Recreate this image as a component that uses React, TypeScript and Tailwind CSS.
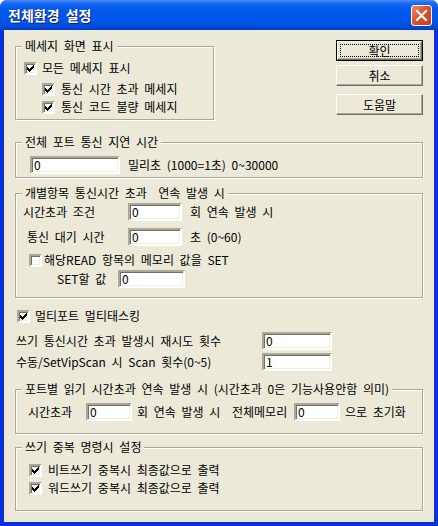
import type { ReactNode } from "react";

function Check({ checked = false }: { checked?: boolean }) {
  return (
    <span className="flex h-[13px] w-[13px] shrink-0 items-center justify-center border-2 border-t-[#ACA899] border-l-[#ACA899] border-r-white border-b-white bg-white shadow-[inset_1px_1px_0_#716F64,inset_-1px_-1px_0_#F1EFE2]">
      {checked && (
        <svg width="7" height="7" viewBox="0 0 7 7" shapeRendering="crispEdges">
          <path
            fill="#000"
            d="M6 0h1v1h-1z M5 1h2v1h-2z M0 2h1v1h-1z M4 2h3v1h-3z M0 3h2v1h-2z M3 3h3v1h-3z M0 4h5v1h-5z M1 5h3v1h-3z M2 6h1v1h-1z"
          />
        </svg>
      )}
    </span>
  );
}

function Edit({ value, className = "" }: { value: string; className?: string }) {
  return (
    <div
      className={`flex h-[18px] shrink-0 items-center border-2 border-t-[#ACA899] border-l-[#ACA899] border-r-white border-b-white bg-white pl-[2px] shadow-[inset_1px_1px_0_#716F64,inset_-1px_-1px_0_#F1EFE2] ${className}`}
    >
      {value}
    </div>
  );
}

function Group({ title, className = "", children }: { title: string; className?: string; children: ReactNode }) {
  return (
    <div className={`relative border border-[#ACA899] shadow-[1px_1px_0_#fff,inset_1px_1px_0_#fff] ${className}`}>
      <span className="absolute left-[6px] top-[-8px] bg-[#ECE9D8] px-[3px] leading-[14px] whitespace-pre">{title}</span>
      {children}
    </div>
  );
}

function Btn({ label, isDefault = false }: { label: string; isDefault?: boolean }) {
  if (isDefault) {
    return (
      <div className="h-[21px] w-[87px] border border-black">
        <div className="relative flex h-full items-center justify-center border border-t-white border-l-white border-r-[#716F64] border-b-[#716F64] shadow-[inset_-1px_-1px_0_#ACA899]">
          <span className="absolute inset-[2px] border border-dotted border-black" />
          {label}
        </div>
      </div>
    );
  }
  return (
    <div className="flex h-[21px] w-[87px] items-center justify-center border border-t-white border-l-white border-r-[#716F64] border-b-[#716F64] shadow-[inset_-1px_-1px_0_#ACA899]">
      {label}
    </div>
  );
}

function CheckRow({ label, className = "", gap = "ml-[5px]" }: { label: string; className?: string; gap?: string }) {
  return (
    <div className={`flex h-[18px] items-center ${className}`}>
      <Check checked />
      <span className={gap}>{label}</span>
    </div>
  );
}

export default function App() {
  return (
    <div className="flex h-[526px] w-[438px] flex-col overflow-hidden rounded-t-[7px] bg-[#0831D9] font-['Noto_Sans_CJK_KR',sans-serif] text-[12px] leading-[14px] text-black [word-spacing:3px]">
      {/* 제목 표시줄 */}
      <div className="flex h-[30px] shrink-0 items-center justify-between bg-[linear-gradient(to_bottom,#4A8CF7_0%,#1D6BEF_10%,#0058EE_30%,#0055E5_75%,#0049D6_90%,#003DC2_100%)] pl-[8px] pr-[6px]">
        <span className="text-[14px] font-bold text-white [text-shadow:1px_1px_0_#0A1883]">전체환경 설정</span>
        <div className="flex h-[21px] w-[21px] items-center justify-center rounded-[3px] border border-white bg-[linear-gradient(135deg,#EE8A6B_0%,#E0522E_45%,#C23D18_100%)]">
          <svg width="13" height="13" viewBox="0 0 13 13">
            <path d="M2 2L11 11M11 2L2 11" stroke="#fff" strokeWidth="2.2" strokeLinecap="square" />
          </svg>
        </div>
      </div>

      {/* 본문 */}
      <div className="mx-[4px] mb-[4px] flex-1 bg-[#ECE9D8] px-[11px] pt-[10px]">
        <div className="flex items-start justify-between">
          <Group title="메세지 화면 표시" className="mt-[6px] w-[199px] pb-[3px] pt-[12px]">
            <CheckRow label="모든 메세지 표시" className="pl-[8px]" />
            <CheckRow label="통신 시간 초과 메세지" className="mt-[3px] pl-[26px]" gap="ml-[6px]" />
            <CheckRow label="통신 코드 불량 메세지" className="pl-[26px]" gap="ml-[6px]" />
          </Group>
          <div className="flex flex-col">
            <Btn label="확인" isDefault />
            <div className="mt-[4px]">
              <Btn label="취소" />
            </div>
            <div className="mt-[8px]">
              <Btn label="도움말" />
            </div>
          </div>
        </div>

        <Group title="전체 포트 통신 지연 시간" className="mt-[22px] pb-[3px] pt-[13px]">
          <div className="flex items-center pl-[14px]">
            <Edit value="0" className="w-[90px]" />
            <span className="ml-[8px]">밀리초 (1000=1초) 0~30000</span>
          </div>
        </Group>

        <Group title="개별항목 통신시간 초과  연속 발생 시" className="mt-[15px] pb-[9px] pt-[9px]">
          <div className="flex items-center pl-[7px]">
            <span className="w-[105px]">시간초과 조건</span>
            <Edit value="0" className="w-[54px]" />
            <span className="ml-[8px]">회 연속 발생 시</span>
          </div>
          <div className="mt-[7px] flex items-center pl-[11px]">
            <span className="w-[101px]">통신 대기 시간</span>
            <Edit value="0" className="w-[54px]" />
            <span className="ml-[8px]">초 (0~60)</span>
          </div>
          <div className="mt-[5px] flex h-[18px] items-center pl-[13px]">
            <Check />
            <span className="ml-[2px]">해당READ 항목의 메모리 값을 SET</span>
          </div>
          <div className="mt-[1px] flex items-center pl-[41px]">
            <span className="w-[61px]">SET할 값</span>
            <Edit value="0" className="w-[67px]" />
          </div>
        </Group>

        <CheckRow label="멀티포트 멀티태스킹" className="mt-[9px] pl-[2px]" />

        <div className="mt-[7px] flex items-center pl-[1px]">
          <span className="w-[246px]">쓰기 통신시간 초과 발생시 재시도 횟수</span>
          <Edit value="0" className="w-[70px]" />
        </div>
        <div className="mt-[3px] flex items-center pl-[1px]">
          <span className="w-[246px]">수동/SetVipScan 시 Scan 횟수(0~5)</span>
          <Edit value="1" className="w-[70px]" />
        </div>

        <Group title="포트별 읽기 시간초과 연속 발생 시 (시간초과 0은 기능사용안함 의미)" className="mt-[18px] pb-[12px] pt-[13px]">
          <div className="flex items-center pl-[12px]">
            <span className="w-[58px]">시간초과</span>
            <Edit value="0" className="w-[46px]" />
            <span className="ml-[5px] w-[95px]">회 연속 발생 시</span>
            <span className="w-[62px]">전체메모리</span>
            <Edit value="0" className="w-[46px]" />
            <span className="ml-[5px]">으로 초기화</span>
          </div>
        </Group>

        <Group title="쓰기 중복 명령시 설정" className="mt-[13px] pb-[13px] pt-[13px]">
          <CheckRow label="비트쓰기 중복시 최종값으로 출력" className="pl-[13px]" gap="ml-[6px]" />
          <CheckRow label="워드쓰기 중복시 최종값으로 출력" className="pl-[13px]" gap="ml-[6px]" />
        </Group>
      </div>
    </div>
  );
}
